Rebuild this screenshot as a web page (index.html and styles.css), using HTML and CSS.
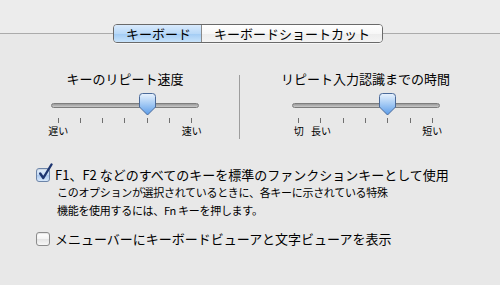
FILE: index.html
```html
<!DOCTYPE html>
<html lang="ja">
<head>
<meta charset="utf-8">
<title>キーボード</title>
<link rel="stylesheet" href="styles.css">
</head>
<body>
<div class="window">
  <div class="tabs-row">
    <div class="segmented">
      <div class="seg active">キーボード</div>
      <div class="seg">キーボードショートカット</div>
    </div>
  </div>
  <div class="panel">
    <div class="sliders">
      <div class="slider-col">
        <div class="slider-title">キーのリピート速度</div>
        <div class="slider">
          <div class="track-area">
            <div class="track"></div>
            <div class="rail">
              <div class="thumb" style="left: 66.667%">
                <svg width="17" height="23" viewBox="0 0 17 23"><defs><linearGradient id="tg1" x1="0" y1="0" x2="0" y2="1"><stop offset="0" stop-color="#eaf3fd"/><stop offset="0.45" stop-color="#a9cdf5"/><stop offset="1" stop-color="#5a9be8"/></linearGradient></defs><path d="M3.5 0.5 H13.5 Q16.5 0.5 16.5 3.5 V14 L8.5 22 L0.5 14 V3.5 Q0.5 0.5 3.5 0.5 Z" fill="url(#tg1)" stroke="#4a6a9a"/></svg>
              </div>
            </div>
          </div>
          <div class="ticks"><span></span><span></span><span></span><span></span><span></span><span></span><span></span></div>
          <div class="tick-labels"><span>遅い</span><span></span><span></span><span></span><span></span><span></span><span>速い</span></div>
        </div>
      </div>
      <div class="divider"></div>
      <div class="slider-col">
        <div class="slider-title">リピート入力認識までの時間</div>
        <div class="slider">
          <div class="track-area">
            <div class="track"></div>
            <div class="rail">
              <div class="thumb" style="left: 66.667%">
                <svg width="17" height="23" viewBox="0 0 17 23"><defs><linearGradient id="tg2" x1="0" y1="0" x2="0" y2="1"><stop offset="0" stop-color="#eaf3fd"/><stop offset="0.45" stop-color="#a9cdf5"/><stop offset="1" stop-color="#5a9be8"/></linearGradient></defs><path d="M3.5 0.5 H13.5 Q16.5 0.5 16.5 3.5 V14 L8.5 22 L0.5 14 V3.5 Q0.5 0.5 3.5 0.5 Z" fill="url(#tg2)" stroke="#4a6a9a"/></svg>
              </div>
            </div>
          </div>
          <div class="ticks"><span></span><span></span><span></span><span></span><span></span><span></span><span></span></div>
          <div class="tick-labels"><span>切</span><span>長い</span><span></span><span></span><span></span><span></span><span>短い</span></div>
        </div>
      </div>
    </div>

    <div class="options">
      <div class="option">
        <span class="checkbox checked">
          <svg class="check" width="16" height="18" viewBox="0 0 16 18"><path d="M3.2 10.5 L6.3 15 L14.5 1.5" fill="none" stroke="#1d3570" stroke-width="2.4" stroke-linecap="round" stroke-linejoin="round"/></svg>
        </span>
        <div class="option-text">
          <div class="option-label">F1、F2 などのすべてのキーを標準のファンクションキーとして使用</div>
          <div class="option-desc">このオプションが選択されているときに、各キーに示されている特殊<br>機能を使用するには、Fn キーを押します。</div>
        </div>
      </div>
      <div class="option second">
        <span class="checkbox"></span>
        <div class="option-text">
          <div class="option-label">メニューバーにキーボードビューアと文字ビューアを表示</div>
        </div>
      </div>
    </div>
  </div>
</div>
</body>
</html>
```

FILE: styles.css
```css
* { box-sizing: border-box; }

html, body {
  margin: 0;
  padding: 0;
}

body {
  width: 500px;
  height: 285px;
  overflow: hidden;
  background: #ececec;
  font-family: "Noto Sans CJK JP", "Noto Sans", sans-serif;
  color: #000;
}

.window {
  display: flex;
  flex-direction: column;
  height: 285px;
}

.tabs-row {
  display: flex;
  padding-top: 24px;
  padding-left: 113px;
  margin-bottom: -10px;
  position: relative;
  z-index: 1;
}

.segmented {
  display: flex;
  height: 19px;
  border: 1px solid #6a6a6a;
  border-radius: 4px;
  overflow: hidden;
  box-shadow: 0 1px 0 rgba(255,255,255,0.6);
}

.seg {
  font-size: 13px;
  line-height: 17px;
  padding: 0 10px 0 12px;
  background: linear-gradient(#ffffff 0%, #f7f7f7 50%, #ececec 51%, #f4f4f4 100%);
  white-space: nowrap;
}

.seg + .seg {
  padding: 0 12px;
  border-left: 1px solid #8a8a8a;
}

.seg.active {
  background: linear-gradient(#d9eafc 0%, #b9d9f8 50%, #a1cbf4 51%, #c8e3fb 100%);
}

.panel {
  flex: 1;
  border-top: 1px solid #ababab;
  background: #e8e8e8;
  padding-top: 37px;
}

.sliders {
  display: grid;
  grid-template-columns: 228px 1px 251px;
  padding-left: 11px;
}

.slider-col {
  display: flex;
  flex-direction: column;
  align-items: center;
}

.slider-title {
  font-size: 13px;
  line-height: 16px;
  white-space: nowrap;
}

.slider {
  width: 156px;
  margin-top: 6px;
}

.track-area {
  position: relative;
  height: 22px;
  padding: 10px 4px 0;
}

.track {
  height: 5px;
  border-radius: 3px;
  border: 1px solid #7d7d7d;
  background: linear-gradient(#9a9a9a, #c9c9c9);
}

.rail {
  position: absolute;
  top: 0;
  bottom: 0;
  left: 11px;
  right: 11px;
}

.thumb {
  position: absolute;
  top: 0;
  margin-left: -8.5px;
  width: 17px;
  height: 23px;
}

.thumb svg { display: block; }

.ticks {
  display: grid;
  grid-template-columns: repeat(7, 1fr);
  margin-top: 3px;
  height: 5px;
}

.ticks span {
  justify-self: center;
  width: 1px;
  height: 5px;
  background: #6f6f6f;
}

.tick-labels {
  display: grid;
  grid-template-columns: repeat(7, 1fr);
  margin-top: 2px;
  font-size: 10px;
  line-height: 12px;
}

.tick-labels span {
  justify-self: center;
  white-space: nowrap;
}

.divider {
  width: 1px;
  height: 64px;
  margin-top: 4px;
  background: #9d9d9d;
}

.options {
  margin-top: 28px;
  padding-left: 36px;
  display: flex;
  flex-direction: column;
}

.option {
  display: flex;
  gap: 5px;
}

.option.second {
  margin-top: 12px;
}

.checkbox {
  position: relative;
  flex: none;
  width: 14px;
  height: 14px;
  margin-top: 1px;
  border: 1px solid #8c8c8c;
  border-radius: 3px;
  background: linear-gradient(#ffffff 0%, #f3f3f3 50%, #e4e4e4 51%, #f7f7f7 100%);
  box-shadow: inset 0 1px 1px rgba(0,0,0,0.1);
}

.checkbox.checked {
  border-color: #6c84a8;
  background: linear-gradient(#e4effb 0%, #c6dcf5 50%, #acc9ee 51%, #d6e7fa 100%);
}

.check {
  position: absolute;
  left: 0;
  top: -6px;
}

.option-label {
  font-size: 13px;
  line-height: 16px;
  white-space: nowrap;
}

.option-desc {
  margin-top: 1px;
  padding-left: 2px;
  font-size: 11px;
  line-height: 17.5px;
  letter-spacing: -0.3px;
  white-space: nowrap;
}
```
